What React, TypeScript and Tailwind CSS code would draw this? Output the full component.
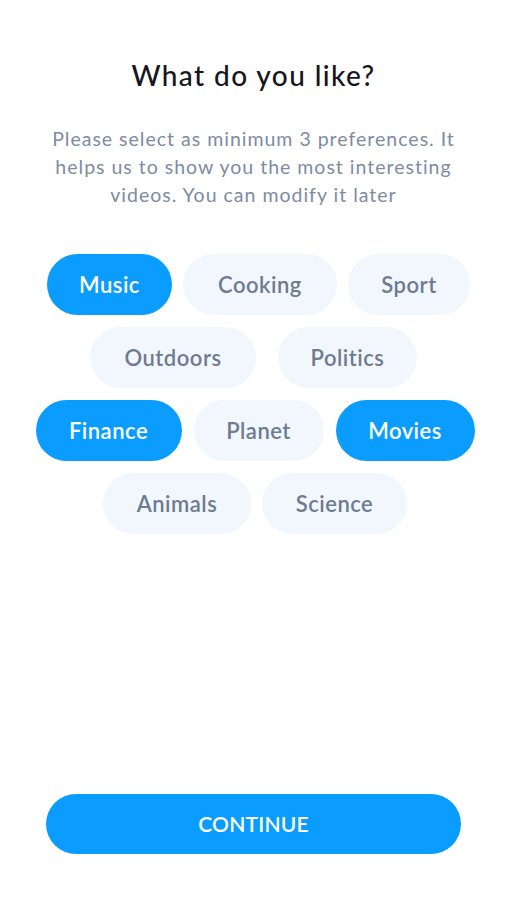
import { useState } from "react";

const rows = [
    {
        cls: "gap-[11px] pl-[10px]",
        items: [
            { label: "Music", w: "w-[125px]" },
            { label: "Cooking", w: "w-[154px]" },
            { label: "Sport", w: "w-[122px]" },
        ],
    },
    {
        cls: "gap-[22px]",
        items: [
            { label: "Outdoors", w: "w-[166px]" },
            { label: "Politics", w: "w-[139px]" },
        ],
    },
    {
        cls: "gap-[12px] pl-[3px]",
        items: [
            { label: "Finance", w: "w-[146px]" },
            { label: "Planet", w: "w-[130px]" },
            { label: "Movies", w: "w-[139px]" },
        ],
    },
    {
        cls: "gap-[11px] pl-[3px]",
        items: [
            { label: "Animals", w: "w-[148px]" },
            { label: "Science", w: "w-[145px]" },
        ],
    },
];

export default function App() {
    const [picked, setPicked] = useState<string[]>(["Music", "Finance", "Movies"]);

    const toggle = (label: string) =>
        setPicked((p) => (p.includes(label) ? p.filter((x) => x !== label) : [...p, label]));

    return (
        <div className="w-[507px] h-[900px] bg-white flex flex-col items-center font-['Lato',sans-serif]">
            <h1 className="mt-[55px] text-[28px] leading-[40px] font-medium text-[#15161e] tracking-[1.4px]">
                What do you like?
            </h1>
            <p className="mt-[30px] w-[424px] text-center text-[19.5px] leading-[28px] text-[#7d8ba3] tracking-[1px]">
                Please select as minimum 3 preferences. It helps us to show you the most interesting videos. You can modify it later
            </p>

            {/* Preference pills */}
            <div className="mt-[45px] flex flex-col gap-3 items-center">
                {rows.map((row, i) => (
                    <div key={i} className={`flex justify-center ${row.cls}`}>
                        {row.items.map((item) => {
                            const on = picked.includes(item.label);
                            return (
                                <button
                                    key={item.label}
                                    onClick={() => toggle(item.label)}
                                    className={`${item.w} h-[61px] rounded-full text-[22px] font-semibold tracking-[0.5px] ${
                                        on ? "bg-[#0a9cff] text-white" : "bg-[#f2f7fd] text-[#6e7b91]"
                                    }`}
                                >
                                    {item.label}
                                </button>
                            );
                        })}
                    </div>
                ))}
            </div>

            <div className="flex-1" />
            <button className="mb-[46px] w-[415px] h-[60px] rounded-full bg-[#0a9cff] text-white text-[21px] font-semibold tracking-[0.2px]">
                CONTINUE
            </button>
        </div>
    );
}
